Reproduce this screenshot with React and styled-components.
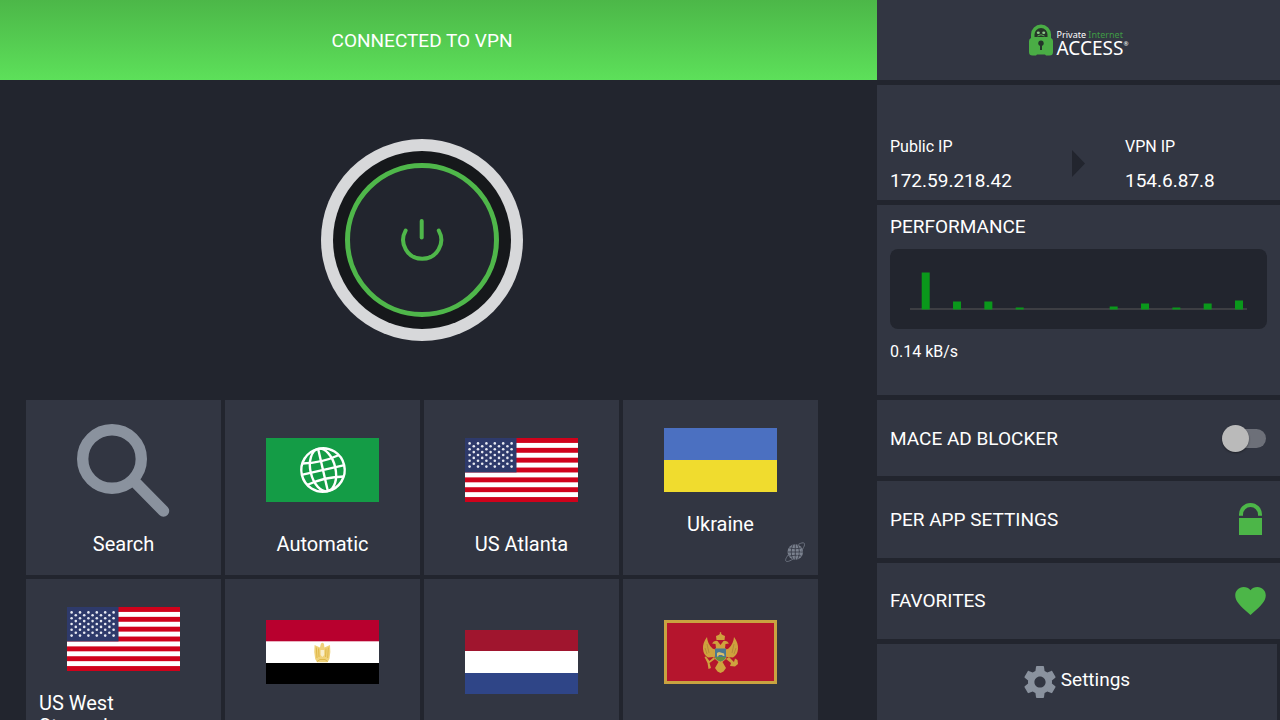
import { useState } from "react";
import styled, { createGlobalStyle } from "styled-components";

const throughput = [37, 8, 8, 2, 0, 0, 3, 6, 2, 6, 9];

const App = () => {
  const [mace, setMace] = useState(false);

  return (
    <>
      <GlobalStyle />
      <Screen>
        <Main>
          <StatusBar>CONNECTED TO VPN</StatusBar>
          <PowerArea>
            <PowerButton aria-label="Disconnect">
              <PowerIcon />
            </PowerButton>
          </PowerArea>
          <Tiles>
            <Tile>
              <Art>
                <SearchIcon />
              </Art>
              <TileLabel>Search</TileLabel>
            </Tile>
            <Tile>
              <Art>
                <AutomaticFlag />
              </Art>
              <TileLabel>Automatic</TileLabel>
            </Tile>
            <Tile>
              <Art>
                <UsFlag />
              </Art>
              <TileLabel>US Atlanta</TileLabel>
            </Tile>
            <Tile $geo>
              <Art>
                <UkraineFlag />
              </Art>
              <TileLabel>Ukraine</TileLabel>
              <GeoBadge>
                <GeoIcon />
              </GeoBadge>
            </Tile>
            <Tile>
              <Art>
                <UsFlag />
              </Art>
              <TileLabel>US West Streaming Optimized</TileLabel>
            </Tile>
            <Tile $geo>
              <Art>
                <EgyptFlag />
              </Art>
              <TileLabel>Egypt</TileLabel>
              <GeoBadge>
                <GeoIcon />
              </GeoBadge>
            </Tile>
            <Tile>
              <Art>
                <NetherlandsFlag />
              </Art>
              <TileLabel>Netherlands</TileLabel>
            </Tile>
            <Tile $geo>
              <Art>
                <MontenegroFlag />
              </Art>
              <TileLabel>Montenegro</TileLabel>
              <GeoBadge>
                <GeoIcon />
              </GeoBadge>
            </Tile>
          </Tiles>
        </Main>

        <Sidebar>
          <LogoPanel>
            <LogoMark />
            <LogoText>
              <LogoTop>
                Private <em>Internet</em>
              </LogoTop>
              <LogoBottom>
                ACCESS<sup>®</sup>
              </LogoBottom>
            </LogoText>
          </LogoPanel>

          <IpPanel>
            <IpBlock>
              <Small>Public IP</Small>
              <Value>172.59.218.42</Value>
            </IpBlock>
            <Arrow viewBox="0 0 13 27">
              <path d="M0 0L13 13.5L0 27Z" fill="#22252e" />
            </Arrow>
            <IpBlock>
              <Small>VPN IP</Small>
              <Value>154.6.87.8</Value>
            </IpBlock>
          </IpPanel>

          <PerformancePanel>
            <Heading>PERFORMANCE</Heading>
            <ChartBox>
              <Chart viewBox="0 0 337 40">
                <rect x="0" y="37" width="337" height="2" fill="#3d3e43" />
                {throughput.map((h, i) => (
                  <rect
                    key={i}
                    x={11.7 + i * 31.33}
                    y={38.5 - h}
                    width="8"
                    height={h}
                    fill="#0a981b"
                  />
                ))}
              </Chart>
            </ChartBox>
            <Small>0.14 kB/s</Small>
          </PerformancePanel>

          <ToggleRow>
            MACE AD BLOCKER
            <Switch
              type="checkbox"
              role="switch"
              checked={mace}
              onChange={(e) => setMace(e.target.checked)}
            />
          </ToggleRow>
          <MenuButton>
            PER APP SETTINGS
            <LockIcon />
          </MenuButton>
          <MenuButton>
            FAVORITES
            <HeartIcon />
          </MenuButton>
          <SettingsButton>
            <GearIcon />
            <SettingsLabel>Settings</SettingsLabel>
          </SettingsButton>
        </Sidebar>
      </Screen>
    </>
  );
};

const PowerIcon = () => (
  <svg viewBox="0 0 202 202" width="202" height="202" fill="none">
    <circle cx="101" cy="101" r="101" fill="#d7d8da" />
    <circle cx="101" cy="101" r="89" fill="#16181b" />
    <circle cx="101" cy="101" r="74.5" fill="#22252e" stroke="#4fb74a" strokeWidth="5" />
    <g stroke="#4fb74a" strokeWidth="4" strokeLinecap="round">
      <path d="M84.6 91.6A19 19 0 1 0 117.8 91.6" />
      <path d="M100.7 82V98.5" />
    </g>
  </svg>
);

const SearchIcon = () => (
  <svg viewBox="0 0 93 93" width="93" height="93" fill="none" stroke="#8a929e">
    <circle cx="35" cy="35" r="29.3" strokeWidth="11.4" />
    <path d="M56 56L86.5 87" strokeWidth="11.5" strokeLinecap="round" />
  </svg>
);

const Flag = ({ children }) => (
  <svg viewBox="0 0 113 64" width="113" height="64">
    {children}
  </svg>
);

const AutomaticFlag = () => (
  <Flag>
    <rect width="113" height="64" fill="#149c46" />
    <g transform="translate(57 32) rotate(-13)" fill="none" stroke="#fff" strokeWidth="2.4">
      <circle r="21.7" />
      <ellipse rx="12.5" ry="21.7" />
      <path d="M0 -22V22M-22 0H22" />
      <path d="M-19 -11Q0 -7 19 -11M-19 11Q0 7 19 11" />
    </g>
  </Flag>
);

const stars = [];
for (let row = 0; row < 9; row++) {
  const odd = row % 2;
  for (let col = 0; col < 6 - odd; col++) {
    stars.push([4.6 + odd * 4.2 + col * 8.4, 5.4 + row * 2.9]);
  }
}

const UsFlag = () => (
  <Flag>
    <rect width="113" height="64" fill="#fff" />
    {[0, 1, 2, 3, 4, 5, 6].map((i) => (
      <rect key={i} y={(i * 128) / 13} width="113" height={64 / 13} fill="#d0021b" />
    ))}
    <rect width="51.5" height="34.4" fill="#2e3a6b" />
    {stars.map(([x, y]) => (
      <circle key={`${x}-${y}`} cx={x} cy={y} r="1.3" fill="#e8eaf2" />
    ))}
  </Flag>
);

const UkraineFlag = () => (
  <Flag>
    <rect width="113" height="64" fill="#4b70c1" />
    <rect y="32" width="113" height="32" fill="#f0dc2e" />
  </Flag>
);

const EgyptFlag = () => (
  <Flag>
    <rect width="113" height="64" fill="#fff" />
    <rect width="113" height="21.3" fill="#b8002e" />
    <rect y="43" width="113" height="21" fill="#000" />
    <path
      d="M48.6 25L54 27.5L54.8 24Q56.5 21.5 58 24L58.4 27.5L64 25Q65 32 63.4 39L61.5 42.3H51L49.2 39Q47.6 32 48.6 25Z"
      fill="#f0d27a"
    />
    <path
      d="M50.3 27.5L51 38M52.6 28.5L53 37M60 28.5L59.6 37M62.3 27.5L61.7 38M51 41.5L54 39.5H59L61.5 41.5"
      stroke="#dfb848"
      fill="none"
    />
    <path d="M54.6 30H58.2V35L56.4 37L54.6 35Z" fill="#f9efcd" />
  </Flag>
);

const NetherlandsFlag = () => (
  <Flag>
    <rect width="113" height="64" fill="#fff" />
    <rect width="113" height="21" fill="#a0152e" />
    <rect y="43" width="113" height="21" fill="#2f4587" />
  </Flag>
);

const MontenegroFlag = () => (
  <Flag>
    <rect width="113" height="64" fill="#c9a340" />
    <rect x="3" y="3" width="107" height="58" fill="#b5152d" />
    <g fill="#cfa23e">
      <path d="M52.5 20L52 16L54.5 15L55.8 14V12.2H57.2V14L58.7 15L61 16L60.5 20Z" />
      <path d="M43 17Q38.5 23 39 29Q39.5 35 44 37.5L50.5 37L52 30L48.5 28.5Q43.5 24 43 17Z" />
      <path d="M70 17Q74.5 23 74 29Q73.5 35 69 37.5L62.5 37L61 30L64.5 28.5Q69.5 24 70 17Z" />
      <path d="M48 23.5Q50 20 53.5 21L56.5 25L59.5 21Q63 20 65 23.5L61.5 24L61 28L64 31L62 39L58.5 42L62 48L59.5 51.5L56.5 53L53.5 51.5L51 48L54.5 42L51 39L49 31L52 28L51.5 24Z" />
      <path d="M51 39L45.5 43L47 48L44.5 49L43.5 43L40.5 37L42 36.5L45.5 41L50 37Z" />
      <path d="M62 39L67 43L66 46L71 46.5L74 44L73.5 40L71 38.5L70 42L65 37Z" />
    </g>
    <path d="M51 28.5H62V37Q61 40 56.5 41.5Q52 40 51 37Z" fill="#4b7892" />
    <path d="M51.3 37H61.7Q60.7 40 56.5 41.3Q52.3 40 51.3 37Z" fill="#66903c" />
    <path d="M53 33L55 32L60 33.5L60.5 36H59L58 35H55L54 36.5H53Z" fill="#d9c06c" />
    <path d="M43 24L45 33M70 24L68 33M41 28L43 34M72 28L70 34" stroke="#a98134" strokeWidth=".7" />
  </Flag>
);

const GeoIcon = () => (
  <svg viewBox="0 0 20 20" width="20" height="20" fill="none">
    <circle cx="10.3" cy="10" r="7.8" fill="#7b828f" />
    <path
      d="M10.3 2V18M2.5 10H18M4.3 6Q10.3 7.6 16.3 6M4.3 14Q10.3 12.4 16.3 14M8 2.5Q4.4 10 8 17.5M12.6 2.5Q16.2 10 12.6 17.5"
      stroke="#323642"
      strokeWidth=".8"
    />
    <path
      d="M4.5 11.5C1 15.5 -.3 18.5 1.2 19.3C3.5 20.4 9.2 16.8 13.6 12.2C18 7.5 20.6 2.6 19.2 1.2C18.3 .3 16 .9 13.4 2.4"
      stroke="#6a707d"
      strokeWidth="1"
    />
  </svg>
);

const LogoMark = () => (
  <svg viewBox="0 0 24 32" width="24" height="32">
    <path
      d="M2 14V10.5A10 10 0 0 1 22 10.5V14Q24 15 24 17V28Q24 31.5 20.5 31.5H17L16 30.5H8L7 31.5H3.5Q0 31.5 0 28V17Q0 15 2 14Z"
      fill="#4aad45"
    />
    <path d="M5.5 13V10.5A6.5 6.5 0 0 1 18.5 10.5V13Z" fill="#263428" />
    <ellipse cx="9.3" cy="8.7" rx="1.5" ry="1.3" fill="#8dca8a" />
    <ellipse cx="14.7" cy="8.7" rx="1.5" ry="1.3" fill="#8dca8a" />
    <path d="M8.5 12Q12 9.5 15.5 12" stroke="#59a956" fill="none" />
    <circle cx="12" cy="19.2" r="2.7" fill="#24352a" />
    <path d="M11 20H13V26H11Z" fill="#24352a" />
  </svg>
);

const LockIcon = () => (
  <svg viewBox="0 0 31 32" width="31" height="32" fill="none">
    <path d="M6 12.8V11.5A9.5 9.5 0 0 1 25 11.5V12.8" stroke="#4cb648" strokeWidth="4" />
    <rect x="4" y="15" width="23" height="17" fill="#4cb648" />
  </svg>
);

const HeartIcon = () => (
  <svg viewBox="2 3 20 18.35" width="31" height="28">
    <path
      d="M12 21.35l-1.45-1.32C5.4 15.36 2 12.28 2 8.5 2 5.42 4.42 3 7.5 3c1.74 0 3.41.81 4.5 2.09C13.09 3.81 14.76 3 16.5 3 19.58 3 22 5.42 22 8.5c0 3.78-3.4 6.86-8.55 11.54L12 21.35z"
      fill="#4cb648"
    />
  </svg>
);

const GearIcon = () => (
  <svg viewBox="2 2 20 20" width="32" height="32">
    <path
      d="M19.43 12.98c.04-.32.07-.64.07-.98s-.03-.66-.07-.98l2.11-1.65c.19-.15.24-.42.12-.64l-2-3.46c-.12-.22-.39-.3-.61-.22l-2.49 1c-.52-.4-1.08-.73-1.69-.98l-.38-2.65C14.46 2.18 14.25 2 14 2h-4c-.25 0-.46.18-.49.42l-.38 2.65c-.61.25-1.17.59-1.69.98l-2.49-1c-.23-.09-.49 0-.61.22l-2 3.46c-.13.22-.07.49.12.64l2.11 1.65c-.04.32-.07.65-.07.98s.03.66.07.98l-2.11 1.65c-.19.15-.24.42-.12.64l2 3.46c.12.22.39.3.61.22l2.49-1c.52.4 1.08.73 1.69.98l.38 2.65c.03.24.24.42.49.42h4c.25 0 .46-.18.49-.42l.38-2.65c.61-.25 1.17-.59 1.69-.98l2.49 1c.23.09.49 0 .61-.22l2-3.46c.12-.22.07-.49-.12-.64l-2.11-1.65zM12 15.5c-1.93 0-3.5-1.57-3.5-3.5s1.57-3.5 3.5-3.5 3.5 1.57 3.5 3.5-1.57 3.5-3.5 3.5z"
      fill="#8a929e"
    />
  </svg>
);

const GlobalStyle = createGlobalStyle`
  * {
    box-sizing: border-box;
  }

  body {
    margin: 0;
    background: #22252e;
    color: #fff;
    font-family: Roboto, "Liberation Sans", sans-serif;
  }

  button {
    border: 0;
    padding: 0;
    color: inherit;
    font: inherit;
    cursor: pointer;
  }

  svg {
    display: block;
    flex-shrink: 0;
  }
`;

const Screen = styled.div`
  display: grid;
  grid-template-columns: minmax(0, 877fr) minmax(0, 403fr);
  height: 100vh;
  overflow: hidden;
`;

const Main = styled.main`
  display: flex;
  flex-direction: column;
  min-height: 0;
  overflow: hidden;
`;

const StatusBar = styled.header`
  display: flex;
  flex-shrink: 0;
  align-items: center;
  justify-content: center;
  height: 80px;
  padding: 0 59px 0 26px;
  background: linear-gradient(#4cb748, #5de05a);
  font-size: 19px;
`;

const PowerArea = styled.section`
  display: flex;
  flex-shrink: 0;
  align-items: center;
  justify-content: center;
  height: 320px;
  padding: 0 59px 0 26px;
`;

const PowerButton = styled.button`
  border-radius: 50%;
  background: none;
`;

const Tiles = styled.section`
  display: grid;
  grid-template-columns: repeat(4, minmax(0, 1fr));
  gap: 4px;
  padding: 0 59px 0 26px;
`;

const Tile = styled.button`
  position: relative;
  display: flex;
  flex-direction: column;
  align-items: center;
  min-height: 175px;
  padding: 23px 13px ${({ $geo }) => ($geo ? 39 : 19)}px;
  background: #323642;
`;

const Art = styled.span`
  display: flex;
  flex: 1;
  align-items: center;
  min-height: 74px;
`;

const TileLabel = styled.span`
  margin-top: 16px;
  font-size: 20px;
  line-height: 23px;
  text-align: left;
`;

const GeoBadge = styled.span`
  position: absolute;
  right: 13px;
  bottom: 13px;
`;

const Sidebar = styled.aside`
  display: grid;
  grid-template-rows: 80px 115px 190px repeat(4, minmax(0, 1fr));
  gap: 5px;
  min-height: 0;
`;

const Panel = styled.section`
  background: #323642;
`;

const LogoPanel = styled(Panel)`
  display: flex;
  align-items: center;
  justify-content: center;
  gap: 4px;
`;

const LogoText = styled.div`
  display: flex;
  flex-direction: column;
  padding-top: 5px;
  font-family: "Noto Sans", sans-serif;
`;

const LogoTop = styled.span`
  font-size: 9px;
  line-height: 10px;

  em {
    color: #3f9a45;
    font-style: normal;
  }
`;

const LogoBottom = styled.span`
  display: flex;
  font-size: 19px;
  line-height: 16px;

  sup {
    font-size: 6px;
    line-height: 8px;
  }
`;

const IpPanel = styled(Panel)`
  display: grid;
  grid-template-columns: 1fr 93px 1fr;
  align-items: end;
  padding: 0 13px 7px;
`;

const IpBlock = styled.div`
  display: flex;
  flex-direction: column;
  gap: 12px;
`;

const Small = styled.span`
  font-size: 16px;
  line-height: 20px;
`;

const Value = styled.span`
  font-size: 19px;
  line-height: 24px;
`;

const Arrow = styled.svg`
  width: 13px;
  height: 27px;
  margin-bottom: 16px;
  justify-self: center;
`;

const PerformancePanel = styled(Panel)`
  display: flex;
  flex-direction: column;
  padding: 10px 13px;
`;

const Heading = styled.h2`
  margin: 0;
  font-size: 19px;
  font-weight: 400;
  line-height: 24px;
`;

const ChartBox = styled.div`
  margin: 10px 0 13px;
  padding: 22px 20px 18px;
  border-radius: 8px;
  background: #22252e;
`;

const Chart = styled.svg`
  width: 100%;
`;

const ToggleRow = styled.label`
  display: flex;
  align-items: center;
  justify-content: space-between;
  padding: 0 14px 0 13px;
  background: #323642;
  font-size: 19px;
`;

const Switch = styled.input`
  appearance: none;
  display: flex;
  align-items: center;
  width: 40px;
  height: 19px;
  margin: 0;
  border-radius: 10px;
  background: ${({ checked }) => (checked ? "#4cb648" : "#6d7079")};

  &::before {
    content: "";
    width: 27px;
    height: 27px;
    flex-shrink: 0;
    margin-left: ${({ checked }) => (checked ? 17 : -4)}px;
    border-radius: 50%;
    background: #bababa;
    box-shadow: 0 1px 2px rgba(0, 0, 0, 0.4);
  }
`;

const MenuButton = styled.button`
  display: flex;
  align-items: center;
  justify-content: space-between;
  padding: 0 14px 0 13px;
  background: #323642;
  font-size: 19px;
`;

const SettingsButton = styled.button`
  display: flex;
  align-items: center;
  justify-content: center;
  gap: 5px;
  margin-right: 3px;
  background: #323642;
  font-size: 19px;
`;

const SettingsLabel = styled.span`
  padding-bottom: 4px;
`;

export default App;
